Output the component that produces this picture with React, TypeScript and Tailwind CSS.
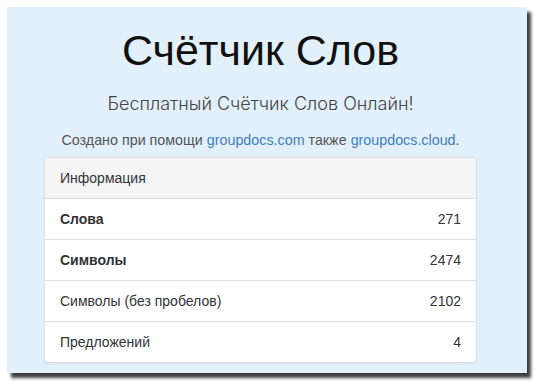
const rows = [
  { label: "Слова", value: "271", bold: true },
  { label: "Символы", value: "2474", bold: true },
  { label: "Символы (без пробелов)", value: "2102", bold: false },
  { label: "Предложений", value: "4", bold: false },
];

export default function App() {
  return (
    <div className="w-[536px] h-[384px] bg-white pt-[7px] pl-[7px] font-['Liberation_Sans',Arial,sans-serif]">
      <div className="w-[520px] h-[366px] bg-[#e2f0fb] shadow-[4px_5px_3px_rgba(0,0,0,0.75)] pr-[13px] flex flex-col items-center">
        <h1 className="mt-[25px] text-[43px] leading-[36px] text-[#111]">Счётчик Слов</h1>
        <p className="mt-[25px] text-[18px] leading-[22px] text-[#444] font-['Inter',sans-serif] font-light">
          Бесплатный Счётчик Слов Онлайн!
        </p>
        <p className="mt-[15px] text-[14.3px] leading-[20px] text-[#555]">
          Создано при помощи <a className="text-[#3f7fbf]">groupdocs.com</a> также{" "}
          <a className="text-[#3f7fbf]">groupdocs.cloud</a>.
        </p>
        <div className="mt-[7px] w-[433px] bg-white border border-[#ddd] rounded-[4px] shadow-[0_1px_1px_rgba(0,0,0,0.05)] text-[14px] leading-[20px] text-[#333]">
          <div className="bg-[#f5f5f5] px-[15px] py-[10px] rounded-t-[3px] border-b border-[#ddd]">Информация</div>
          {rows.map((r, i) => (
            <div
              key={r.label}
              className={`flex justify-between px-[15px] py-[10px] ${i < rows.length - 1 ? "border-b border-[#ddd]" : ""}`}
            >
              <span className={r.bold ? "font-bold" : ""}>{r.label}</span>
              <span>{r.value}</span>
            </div>
          ))}
        </div>
      </div>
    </div>
  );
}
